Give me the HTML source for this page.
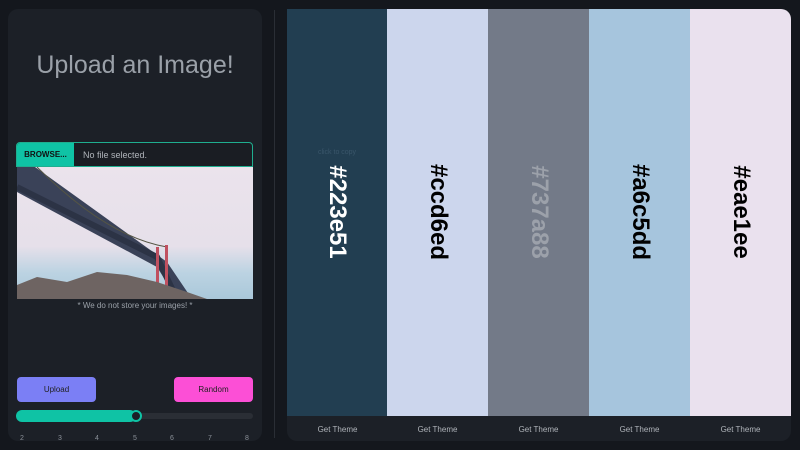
<!DOCTYPE html>
<html><head><meta charset="utf-8"><style>
*{margin:0;padding:0;box-sizing:border-box}
body{width:800px;height:450px;background:#14171d;font-family:"Liberation Sans",sans-serif;position:relative;overflow:hidden}
.left{position:absolute;left:8px;top:9px;width:254px;height:432px;background:#1c2027;border-radius:10px}
h1{position:absolute;left:0;width:254px;top:42px;text-align:center;color:#9aa0a8;font-weight:normal;font-size:25px}
.file{position:absolute;left:8px;top:133px;width:237px;height:25px;border:1px solid #1fae8f;border-radius:4px 4px 0 0;background:#1a1d23;overflow:hidden}
.file .b{position:absolute;left:0;top:0;width:57px;height:24px;background:#0fc3a5;color:#111;font-weight:bold;font-size:8px;line-height:24px;text-align:center}
.file .t{position:absolute;left:66px;top:0;line-height:24px;font-size:9px;color:#b0b4ba}
.img{position:absolute;left:9px;top:158px;width:236px;height:132px;overflow:hidden;background:linear-gradient(180deg,#ebe3ec 0%,#e6e0ea 60%,#bcd3e2 80%,#aac8da 100%)}
.note{position:absolute;left:0;width:254px;top:292px;text-align:center;font-size:8px;color:#9aa0a8}
.btn{position:absolute;top:368px;width:79px;height:25px;border-radius:4px;font-size:8px;line-height:25px;text-align:center;color:#222}
.sl{position:absolute;left:8px;top:404px;width:237px;height:6px;background:#2a2e35;border-radius:3px}
.fill{position:absolute;left:8px;top:401px;width:120px;height:12px;background:#0fc3a5;border-radius:6px}
.knob{position:absolute;left:122px;top:401px;width:12px;height:12px;border-radius:50%;background:#1c2027;border:2px solid #0fc3a5}
.nums span{position:absolute;top:426px;font-size:7px;color:#8a9098}
.div{position:absolute;left:274px;top:10px;width:1px;height:428px;background:#2a2e35}
.right{position:absolute;left:287px;top:9px;width:504px;height:432px;background:#1c2027;border-radius:0 10px 10px 10px;overflow:hidden}
.col{position:absolute;top:0;height:407px}
.col span{position:absolute;left:50%;top:203px;transform:translate(-50%,-50%) rotate(90deg);font-weight:bold;font-size:24px;white-space:nowrap}
.gt{position:absolute;top:416px;font-size:8px;color:#b0b4ba;text-align:center;width:101px}
</style></head><body>
<div class="left">
<h1>Upload an Image!</h1>
<div class="file"><div class="b">BROWSE...</div><div class="t">No file selected.</div></div>
<div class="img"><svg width="236" height="132" viewBox="0 0 236 132">
<path d="M0 0 L18 0 L150 95 L175 132 L160 132 L140 100 L0 25 Z" fill="#3a4258"/>
<path d="M0 20 L140 90 L160 132" stroke="#2c3345" stroke-width="6" fill="none"/>
<path d="M20 0 Q90 70 150 80" stroke="#554" fill="none"/>
<rect x="139" y="80" width="3" height="52" fill="#c05060"/><rect x="148" y="78" width="3" height="54" fill="#c05060"/>
<path d="M0 132 L0 118 L20 110 L50 115 L80 105 L110 108 L140 115 L170 125 L190 132 Z" fill="#6e6462"/>
</svg></div>
<div class="note">* We do not store your images! *</div>
<div class="btn" style="left:9px;background:#7b7ff5">Upload</div>
<div class="btn" style="left:166px;background:#fc4fd6">Random</div>
<div class="sl"></div><div class="fill"></div><div class="knob"></div>
<div class="nums"><span style="left:12px">2</span><span style="left:50px">3</span><span style="left:87px">4</span><span style="left:125px">5</span><span style="left:162px">6</span><span style="left:200px">7</span><span style="left:237px">8</span></div>
</div>
<div class="div"></div>
<div class="right">
<div class="col" style="left:0;width:100px;background:#223e51"><span style="color:#fff">#223e51</span><div style="position:absolute;top:140px;width:100px;text-align:center;font-size:7px;color:#3a566a">click to copy</div></div>
<div class="col" style="left:100px;width:101px;background:#ccd6ed"><span style="color:#000">#ccd6ed</span></div>
<div class="col" style="left:201px;width:101px;background:#737a88"><span style="color:#9ca1aa">#737a88</span></div>
<div class="col" style="left:302px;width:101px;background:#a6c5dd"><span style="color:#000">#a6c5dd</span></div>
<div class="col" style="left:403px;width:101px;background:#eae1ee"><span style="color:#000">#eae1ee</span></div>
<div class="gt" style="left:0">Get Theme</div>
<div class="gt" style="left:100px">Get Theme</div>
<div class="gt" style="left:201px">Get Theme</div>
<div class="gt" style="left:302px">Get Theme</div>
<div class="gt" style="left:403px">Get Theme</div>
</div>
</body></html>
